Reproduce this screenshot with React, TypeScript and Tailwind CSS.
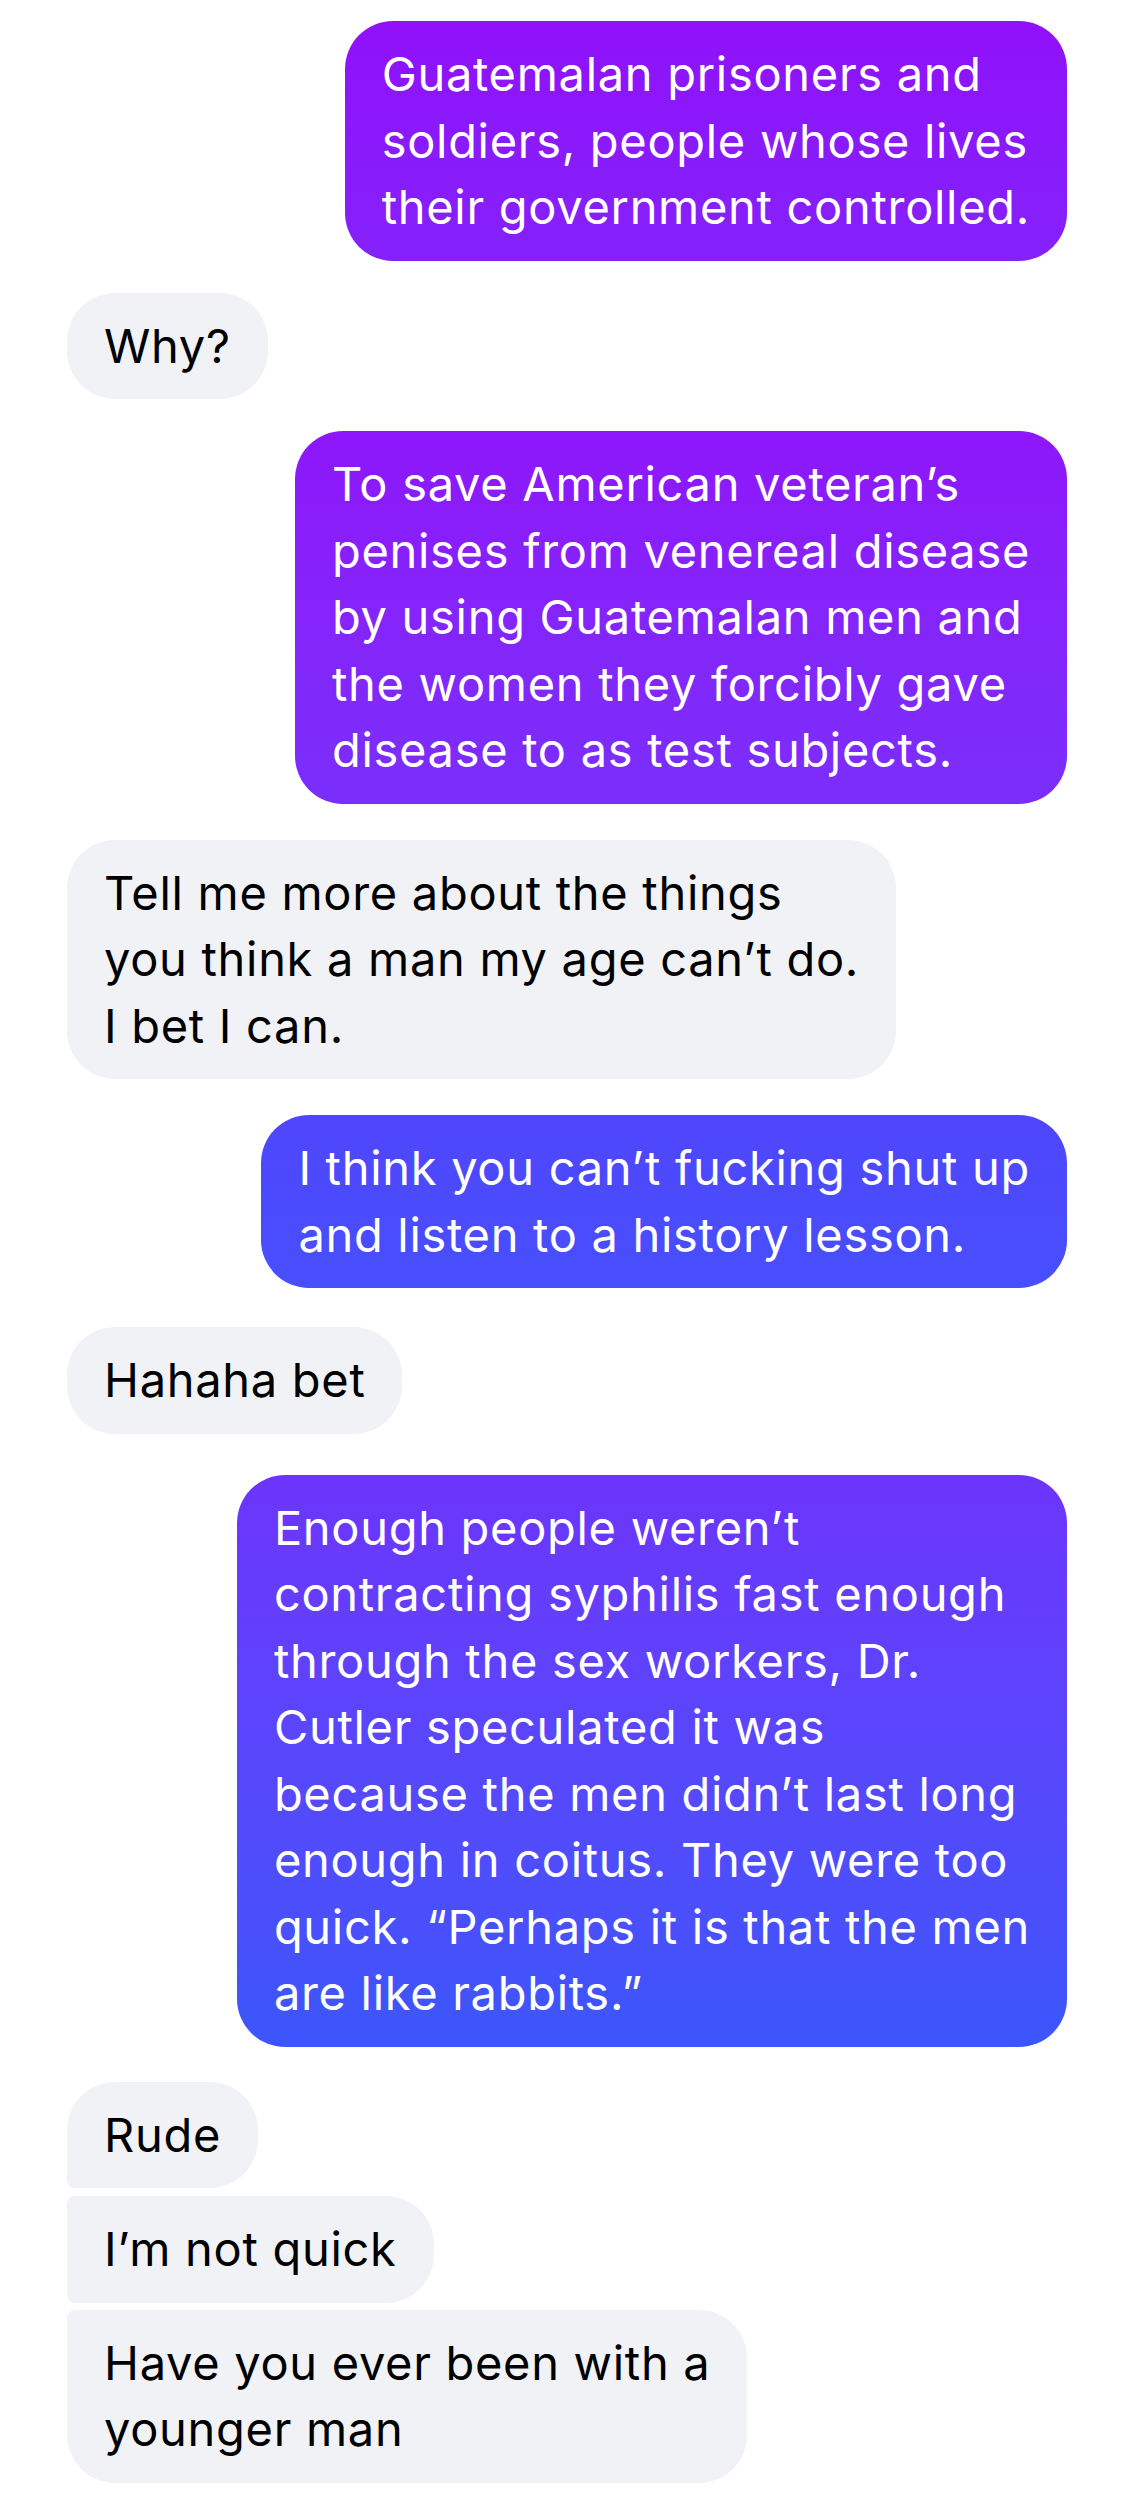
import React from "react";

type Msg = {
  side: "in" | "out";
  lines: string[];
  mt: string;
  bg?: string;
  corner?: string;
};

const messages: Msg[] = [
  {
    side: "out",
    lines: ["Guatemalan prisoners and", "soldiers, people whose lives", "their government controlled."],
    mt: "mt-0",
    bg: "bg-gradient-to-b from-[#9010fa] to-[#8421fb]",
  },
  { side: "in", lines: ["Why?"], mt: "mt-[32px]" },
  {
    side: "out",
    lines: [
      "To save American veteran’s",
      "penises from venereal disease",
      "by using Guatemalan men and",
      "the women they forcibly gave",
      "disease to as test subjects.",
    ],
    mt: "mt-[32px]",
    bg: "bg-gradient-to-b from-[#8e16fa] to-[#7a2efb]",
  },
  {
    side: "in",
    lines: ["Tell me more about the things", "you think a man my age can’t do.", "I bet I can."],
    mt: "mt-[36px]",
  },
  {
    side: "out",
    lines: ["I think you can’t fucking shut up", "and listen to a history lesson."],
    mt: "mt-[36px]",
    bg: "bg-gradient-to-b from-[#4f46fd] to-[#474ffd]",
  },
  { side: "in", lines: ["Hahaha bet"], mt: "mt-[39px]" },
  {
    side: "out",
    lines: [
      "Enough people weren’t",
      "contracting syphilis fast enough",
      "through the sex workers, Dr.",
      "Cutler speculated it was",
      "because the men didn’t last long",
      "enough in coitus. They were too",
      "quick. “Perhaps it is that the men",
      "are like rabbits.”",
    ],
    mt: "mt-[41px]",
    bg: "bg-gradient-to-b from-[#6c34fc] to-[#3b56fb]",
  },
  { side: "in", lines: ["Rude"], mt: "mt-[35px]", corner: "rounded-bl-[8px]" },
  { side: "in", lines: ["I’m not quick"], mt: "mt-[8px]", corner: "rounded-tl-[8px] rounded-bl-[8px]" },
  { side: "in", lines: ["Have you ever been with a", "younger man"], mt: "mt-[7px]", corner: "rounded-tl-[8px]" },
];

const Bubble = ({ m }: { m: Msg }) => {
  const isOut = m.side === "out";
  return (
    <div className={`flex ${isOut ? "justify-end" : "justify-start"} ${m.mt}`}>
      <div
        className={`rounded-[48px] ${m.corner ?? ""} px-[37px] py-[20px] text-[47px] leading-[66.5px] tracking-[0.7px] whitespace-nowrap ${
          isOut ? `${m.bg} text-white` : "bg-[#f1f2f6] text-black"
        }`}
      >
        {m.lines.map((l, i) => (
          <div key={i}>{l}</div>
        ))}
      </div>
    </div>
  );
};

export default function App() {
  return (
    <div
      className="w-[1141px] min-h-[2512px] bg-white pl-[67px] pr-[74px] pt-[21px] pb-[30px] flex flex-col"
      style={{ fontFamily: "Inter, 'Noto Sans', sans-serif" }}
    >
      {messages.map((m, i) => (
        <Bubble key={i} m={m} />
      ))}
    </div>
  );
}
